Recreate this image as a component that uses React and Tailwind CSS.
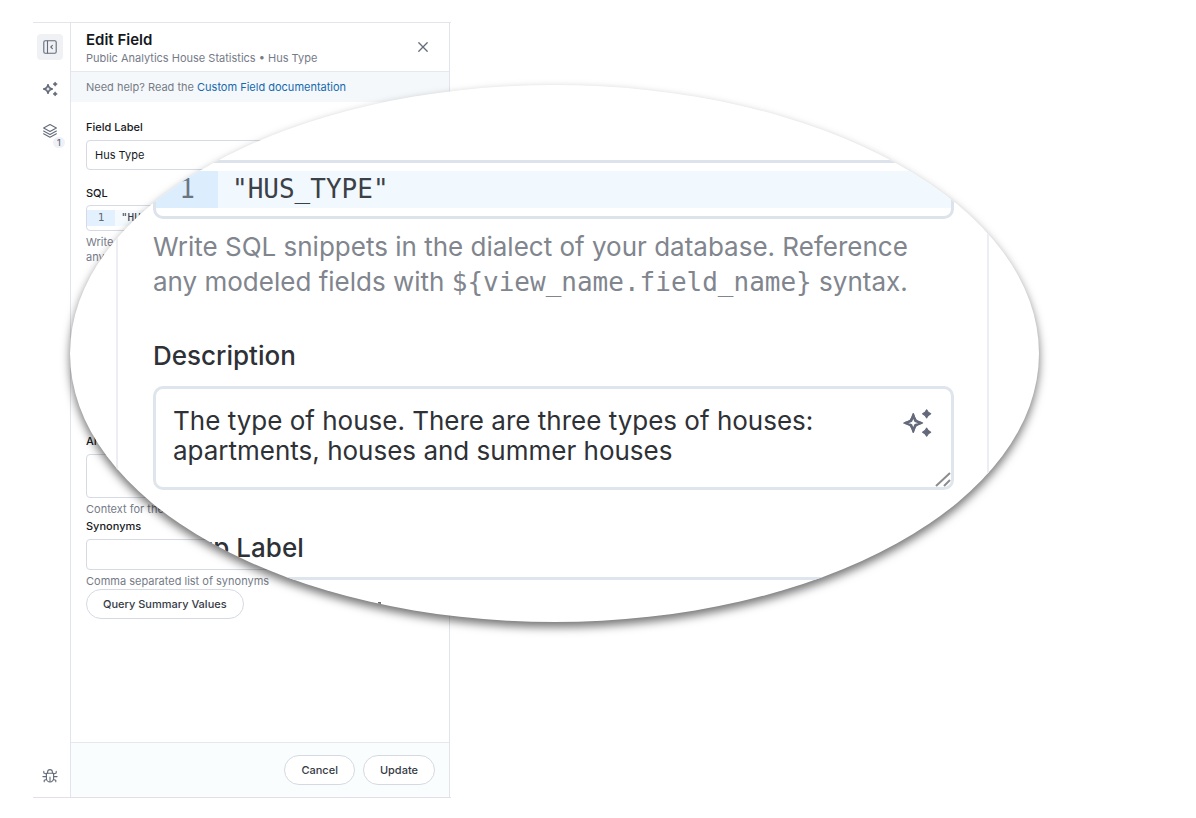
import React from 'react';

function Sparkles({ className }) {
  return (
    <svg viewBox="0 0 28 28" className={className} aria-hidden="true">
      <path
        d="M10.5 5.5 Q11.4 13.1 19 14 Q11.4 14.9 10.5 22.5 Q9.6 14.9 2 14 Q9.6 13.1 10.5 5.5 Z"
        fill="none"
        stroke="currentColor"
        strokeWidth="1.6"
        strokeLinejoin="round"
      />
      <path
        d="M10.5 7 L12.5 12 L17.5 14 L12.5 16 L10.5 21 L8.5 16 L3.5 14 L8.5 12 Z"
        fill="none"
        stroke="currentColor"
        strokeWidth="2.4"
        strokeLinejoin="round"
      />
      <path d="M23 1.6 L24.5 3.8 L26.8 5.4 L24.5 7 L23 9.2 L21.5 7 L19.2 5.4 L21.5 3.8 Z" fill="currentColor" stroke="currentColor" strokeLinejoin="round" />
      <path d="M23 18.8 L24.5 21 L26.8 22.6 L24.5 24.2 L23 26.4 L21.5 24.2 L19.2 22.6 L21.5 21 Z" fill="currentColor" stroke="currentColor" strokeLinejoin="round" />
    </svg>
  );
}

function PanelIcon() {
  return (
    <svg viewBox="0 0 14 14" className="size-[14px]" fill="none" stroke="currentColor" strokeWidth="1.1" strokeLinecap="round" strokeLinejoin="round" aria-hidden="true">
      <rect x="0.8" y="0.8" width="12.4" height="12.4" rx="1.4" />
      <path d="M4.5 1v12M9.4 5.4 7.8 7l1.6 1.6" />
    </svg>
  );
}

function LayersIcon() {
  return (
    <svg viewBox="0 0 16 16" className="size-4" fill="none" stroke="currentColor" strokeWidth="1.1" strokeLinecap="round" strokeLinejoin="round" aria-hidden="true">
      <path d="M8 1.6 14.4 5 8 8.5 1.6 5Z" />
      <path d="M1.6 8 8 11.4 14.4 8" />
      <path d="M1.6 10.8 8 14.2l6.4-3.4" />
    </svg>
  );
}

function BugIcon() {
  return (
    <svg viewBox="0 0 16 16" className="size-4" fill="none" stroke="currentColor" strokeWidth="1.1" strokeLinecap="round" strokeLinejoin="round" aria-hidden="true">
      <path d="M4.4 5.2h7.2v5.2a3.6 3.6 0 0 1-7.2 0Z" />
      <path d="M5.6 5V4a2.4 2.4 0 0 1 4.8 0v1" />
      <path d="M8 9v4.6M4.4 8.6H.9M15.1 8.6h-3.5M4.4 6 1.8 4.9V3.4M11.6 6l2.6-1.1V3.4M4.6 11.4l-2.4.9v1.5M11.4 11.4l2.4.9v1.5" />
    </svg>
  );
}

function Rail() {
  return (
    <nav className="flex w-[38px] shrink-0 flex-col items-start border-r border-[#e1e4ea] pt-[11px] pb-2 pl-1 text-[#646b7a]">
      <button aria-label="Collapse panel" className="flex size-[26px] items-center justify-center rounded bg-[#eff1f4]">
        <PanelIcon />
      </button>
      <button aria-label="Suggestions" className="mt-4 flex size-[26px] items-center justify-center">
        <Sparkles className="size-4" />
      </button>
      <button aria-label="Layers" className="relative mt-4 flex size-[26px] items-center justify-center">
        <LayersIcon />
        <span className="absolute top-[19px] left-4 rounded-full bg-[#eff1f7] px-1 text-[9px] leading-[11px] font-medium">1</span>
      </button>
      <button aria-label="Report a bug" className="mt-auto flex size-[26px] items-center justify-center">
        <BugIcon />
      </button>
    </nav>
  );
}

const label = 'block text-[11px] leading-4 font-medium text-[#15181d]';
const help = 'text-[11px] leading-[15px] text-[#757b87]';
const field = 'block w-full rounded-[4px] border border-[#d5dae4] bg-white px-2 text-[11px] text-[#15181d]';
const pill = 'h-[30px] rounded-full border border-[#d5dae2] bg-white px-4 text-[11px] font-medium text-[#363b45]';

function EditPanel() {
  return (
    <section className="flex w-full max-w-[379px] flex-col border-r border-[#e1e4ea]">
      <header className="flex h-[49px] items-center justify-between border-b border-[#e5e8ed] pr-5 pl-[15px]">
        <div className="pt-1">
          <h1 className="text-[15px] leading-[18px] font-semibold text-[#15181d]">Edit Field</h1>
          <p className="text-[11px] leading-[18px] text-[#757b87]">Public Analytics House Statistics • Hus Type</p>
        </div>
        <button aria-label="Close" className="flex size-3 items-center justify-center text-[#646b7a]">
          <svg viewBox="0 0 12 12" className="size-3" stroke="currentColor" strokeWidth="1.3" strokeLinecap="round" aria-hidden="true">
            <path d="M1.8 1.8l8.4 8.4M10.2 1.8l-8.4 8.4" />
          </svg>
        </button>
      </header>
      <p className="bg-[#f5f8fa] px-[15px] text-[11px] leading-[30px] text-[#757b87]">
        Need help? Read the <a href="#docs" className="text-[#1469b0]">Custom Field documentation</a>
      </p>
      <form className="flex-1 px-[15px] pt-[17px]">
        <label htmlFor="field-label" className={label}>Field Label</label>
        <input id="field-label" defaultValue="Hus Type" className={`${field} mt-[5px] h-[30px]`} />
        <p className={`${label} mt-[15px]`}>SQL</p>
        <div className="mt-1 flex rounded-[4px] border border-[#d5dae4] py-1 font-['DejaVu_Sans_Mono',monospace] text-[11px] leading-4 text-[#363b45]">
          <span className="w-7 bg-[#e2f1fd] text-center text-[#626b78]">1</span>
          <code className="flex-1 bg-[#f4fafe] pl-[6px] font-['DejaVu_Sans_Mono',monospace]">"HUS_TYPE"</code>
        </div>
        <p className={`${help} mt-1`}>
          Write SQL
          <br />
          any
        </p>
        <label htmlFor="ai-context" className={`${label} mt-[168px]`}>AI Context</label>
        <textarea id="ai-context" className={`${field} mt-[5px] h-[44px] resize-none`} />
        <p className={`${help} mt-1`}>Context for the AI</p>
        <label htmlFor="synonyms" className={`${label} mt-px`}>Synonyms</label>
        <input id="synonyms" className={`${field} mt-[5px] h-[31px]`} />
        <p className={`${help} mt-1`}>Comma separated list of synonyms</p>
        <button type="button" className={pill}>Query Summary Values</button>
      </form>
      <footer className="flex h-[55px] items-center justify-end gap-2 border-t border-[#e5e8ed] bg-[#fafdfd] pr-[14px]">
        <button className={pill}>Cancel</button>
        <button className={pill}>Update</button>
      </footer>
    </section>
  );
}

function Magnifier() {
  return (
    <div className="absolute top-[85px] left-[70px] h-[537px] w-[969px] overflow-hidden rounded-[50%] bg-white shadow-[0_5px_10px_rgba(0,0,0,0.55)]">
      <div className="mr-[50px] ml-[46px] h-full border-x-2 border-[#eceef4] pt-[75px] pr-[33px] pl-[35px] text-[26px] text-[#2e3136]">
        <div className="flex rounded-[10px] border-[3px] border-[#dde3ea] py-2 font-['DejaVu_Sans_Mono',monospace] leading-[37px]">
          <span className="w-[62px] bg-[#dceefe] text-center text-[#6c747f]">1</span>
          <code className="flex-1 bg-[#f1f9fe] pl-[14px] font-['DejaVu_Sans_Mono',monospace] text-[#3c4047]">"HUS_TYPE"</code>
        </div>
        <p className="mt-[10px] leading-[35px] whitespace-nowrap text-[#80858e]">
          Write SQL snippets in the dialect of your database. Reference
          <br />
          any modeled fields with <code className="font-['DejaVu_Sans_Mono',monospace] leading-none">{'${view_name.field_name}'}</code> syntax.
        </p>
        <label htmlFor="description" className="mt-[41px] block leading-[32px] font-medium">Description</label>
        <div className="relative mt-[14px]">
          <textarea
            id="description"
            className="block h-[104px] w-full resize-none overflow-hidden rounded-[10px] border-[3px] border-[#dfe5ec] py-[17px] pr-[120px] pl-[17px] leading-[30px]"
            defaultValue={'The type of house. There are three types of houses:\napartments, houses and summer houses'}
          />
          <button aria-label="Generate description" className="absolute top-[22px] right-[22px] text-[#646a7c]">
            <Sparkles className="size-[30px]" />
          </button>
          <svg viewBox="0 0 18 18" className="absolute right-[2px] bottom-[2px] size-[18px]" stroke="#8d8d8d" strokeWidth="2" aria-hidden="true">
            <path d="M2 16 16 3M10 16l6-6" />
          </svg>
        </div>
        <label htmlFor="group-label" className="mt-[42px] block leading-[32px] font-medium">Group Label</label>
        <div className="relative mt-[13px]">
          <input id="group-label" className="block h-[70px] w-full rounded-[10px] border-[3px] border-[#dfe5ec] px-[17px]" />
          <span className="absolute top-[25px] left-[225px] size-[3px] bg-[#6c7076]" />
        </div>
      </div>
    </div>
  );
}

export default function App() {
  return (
    <main className="relative flex min-h-screen bg-white pt-[22px] pr-8 pb-5 pl-[33px] font-['Inter','Liberation_Sans',sans-serif]">
      <div className="flex w-full max-w-[418px] border-t border-b border-t-[#e3e5ea] border-b-[#e5dde8]">
        <Rail />
        <EditPanel />
      </div>
      <Magnifier />
    </main>
  );
}
